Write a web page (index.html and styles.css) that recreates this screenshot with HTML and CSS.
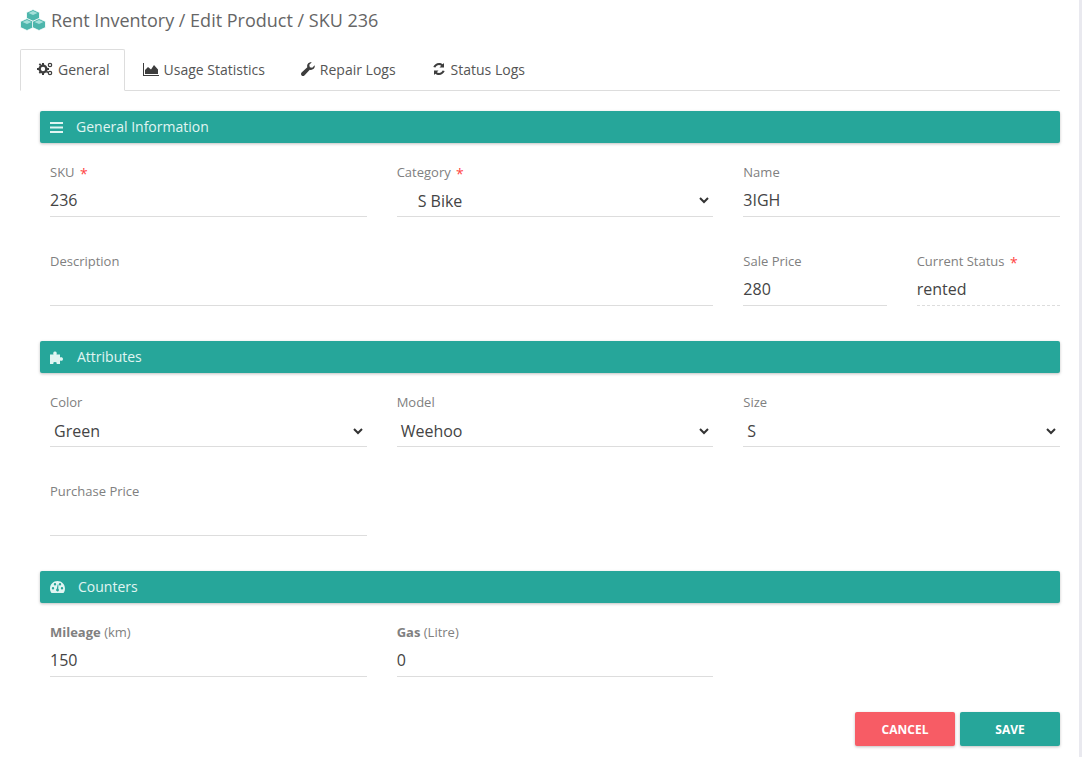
FILE: index.html
```html
<!DOCTYPE html>
<html>
<head>
	<meta charset="UTF-8">
	<title>Edit Product</title>
	<link rel="stylesheet" href="styles.css">
</head>
<body>
	<div class="page">
		<h1 class="title">
			<svg class="cubes" viewBox="0 0 26 22" width="26" height="22">
				<g fill="#4db6ac" stroke="#fff" stroke-width=".8">
					<polygon points="13,.5 19.500,3.500 19.500,9.500 13,12.500 6.500,9.500 6.500,3.500"/>
					<polygon points="7,9.500 13.500,12.500 13.500,18.500 7,21.500 .5,18.500 .5,12.500"/>
					<polygon points="19,9.500 25.500,12.500 25.500,18.500 19,21.500 12.500,18.500 12.500,12.500"/>
				</g>
				<g fill="#a5e0da">
					<polygon points="13,2 17.500,4 13,6 8.500,4"/>
					<polygon points="7,11 11.500,13 7,15 2.500,13"/>
					<polygon points="19,11 23.500,13 19,15 14.500,13"/>
				</g>
			</svg>
			Rent Inventory / Edit Product / SKU 236
		</h1>

		<ul class="tabs">
			<li class="tab active">
				<svg class="ico" viewBox="0 0 16 14" width="16" height="14"><g fill="#3d3d3d"><circle cx="6" cy="7" r="3.4" fill="none" stroke="#3d3d3d" stroke-width="2.4"/><path d="M5 1h2v2H5zM5 11h2v2H5zM0 6h2v2H0zM10 6h2v2h-2zM1.700 2.300l1.400-1.100 1.200 1.500-1.400 1.100zM8.900 9.800l1.400-1.100 1.100 1.500-1.400 1.100zM1.700 10.700l1.400 1.100 1.200-1.500-1.400-1.100z"/><circle cx="13" cy="3" r="1.700" fill="none" stroke="#3d3d3d" stroke-width="1.200"/><circle cx="13" cy="11" r="1.700" fill="none" stroke="#3d3d3d" stroke-width="1.200"/></g></svg>
				General
			</li>
			<li class="tab">
				<svg class="ico" viewBox="0 0 16 13" width="16" height="13"><path fill="#3d3d3d" d="M0 0h1v12h15v1H0z"/><path fill="#3d3d3d" d="M2 11V7l3-3 3 2.500L11 2l4 4.500V11z"/></svg>
				Usage Statistics
			</li>
			<li class="tab">
				<svg class="ico" viewBox="0 0 14 14" width="14" height="14"><path fill="#3d3d3d" d="M13.700 3.200c.3 1.500-.2 3-1.400 3.900-1 .8-2.300 1-3.500.6L3.400 13.400c-.8.800-2 .800-2.800 0s-.8-2 0-2.800L6.300 5.200C5.900 4 6.100 2.700 6.900 1.700 7.800.5 9.300 0 10.800.3L8.300 2.800l.5 2.400 2.400.5z"/></svg>
				Repair Logs
			</li>
			<li class="tab">
				<svg class="ico" viewBox="0 0 14 14" width="14" height="14"><path fill="#3d3d3d" d="M12 1v4.500H7.500l1.700-1.700C8.500 3.200 7.800 3 7 3 5.400 3 4 4 3.400 5.500L1.300 5C2.100 2.700 4.400 1 7 1c1.400 0 2.700.5 3.700 1.300zM2 13V8.500h4.500l-1.700 1.700c.7.600 1.400.8 2.200.8 1.600 0 3-1 3.600-2.500l2.100.5C11.900 11.300 9.600 13 7 13c-1.400 0-2.700-.5-3.700-1.300z"/></svg>
				Status Logs
			</li>
		</ul>

		<div class="content">
			<div class="bar">
				<svg class="bar-ico" viewBox="0 0 13 11" width="13" height="11"><path fill="#e0f5f2" d="M0 0h13v2H0zM0 4.500h13v2H0zM0 9h13v2H0z"/></svg>
				<span class="bar-txt">General Information</span>
			</div>
			<div class="row">
				<div class="field">
					<label>SKU <i>*</i></label>
					<div class="val">236</div>
				</div>
				<div class="field">
					<label>Category <i>*</i></label>
					<div class="val sel cat"><span>S Bike</span><svg class="chev" viewBox="0 0 10 7" width="10" height="7"><path d="M1 1l4 4 4-4" fill="none" stroke="#333" stroke-width="2"/></svg></div>
				</div>
				<div class="field">
					<label>Name</label>
					<div class="val">3IGH</div>
				</div>
			</div>
			<div class="row">
				<div class="field wide">
					<label>Description</label>
					<div class="val"></div>
				</div>
				<div class="pair">
					<div class="field">
						<label>Sale Price</label>
						<div class="val">280</div>
					</div>
					<div class="field">
						<label>Current Status <i>*</i></label>
						<div class="val dash">rented</div>
					</div>
				</div>
			</div>

			<div class="bar next">
				<svg class="bar-ico" viewBox="0 0 14 13" width="14" height="13"><path fill="#e0f5f2" d="M0 3.500h3.500C3 2.500 3 .5 5 .5s2 2 1.500 3H10v3c1-.5 3-.5 3 1.500s-2 2-3 1.500v3.500H6.500c.5-1 .5-2-1.500-2s-2 1-1.500 2H0z"/></svg>
				<span class="bar-txt">Attributes</span>
			</div>
			<div class="row">
				<div class="field">
					<label>Color</label>
					<div class="val sel"><span>Green</span><svg class="chev" viewBox="0 0 10 7" width="10" height="7"><path d="M1 1l4 4 4-4" fill="none" stroke="#333" stroke-width="2"/></svg></div>
				</div>
				<div class="field">
					<label>Model</label>
					<div class="val sel"><span>Weehoo</span><svg class="chev" viewBox="0 0 10 7" width="10" height="7"><path d="M1 1l4 4 4-4" fill="none" stroke="#333" stroke-width="2"/></svg></div>
				</div>
				<div class="field">
					<label>Size</label>
					<div class="val sel"><span>S</span><svg class="chev" viewBox="0 0 10 7" width="10" height="7"><path d="M1 1l4 4 4-4" fill="none" stroke="#333" stroke-width="2"/></svg></div>
				</div>
			</div>
			<div class="row">
				<div class="field">
					<label>Purchase Price</label>
					<div class="val"></div>
				</div>
			</div>

			<div class="bar next">
				<svg class="bar-ico" viewBox="0 0 15 12" width="15" height="12"><path fill="#e0f5f2" fill-rule="evenodd" d="M7.500 0C3.400 0 0 3.400 0 7.500c0 1.700.5 3.200 1.500 4.500h12c1-1.300 1.500-2.800 1.500-4.500C15 3.400 11.600 0 7.500 0zM3 8.500a1.200 1.200 0 1 1 0-2.400 1.200 1.200 0 0 1 0 2.400zM5 4.500a1.200 1.200 0 1 1 0-2.400 1.200 1.200 0 0 1 0 2.400zM7.500 10.500a1.500 1.500 0 0 1-.7-2.800l.9-4.200h.7l-.1 4.300a1.500 1.500 0 0 1-.8 2.700zM10 4.500a1.200 1.200 0 1 1 0-2.400 1.200 1.200 0 0 1 0 2.400zM12 8.500a1.200 1.200 0 1 1 0-2.400 1.200 1.200 0 0 1 0 2.400z"/></svg>
				<span class="bar-txt">Counters</span>
			</div>
			<div class="row">
				<div class="field">
					<label><b>Mileage</b> (km)</label>
					<div class="val">150</div>
				</div>
				<div class="field">
					<label><b>Gas</b> (Litre)</label>
					<div class="val">0</div>
				</div>
			</div>

			<div class="actions">
				<button class="btn cancel">CANCEL</button>
				<button class="btn save">SAVE</button>
			</div>
		</div>
	</div>
</body>
</html>
```

FILE: styles.css
```css
* {
	padding: 0;
	margin: 0;
	box-sizing: border-box;
}
html, body {
	height: 757px;
	overflow: hidden;
	background: #fff;
}
body {
	font-family: "Open Sans", "Liberation Sans", sans-serif;
	color: #555;
}
ul, li {
	list-style: none;
}
.page {
	width: 1082px;
	height: 757px;
	padding: 9px 19px 0 20px;
	border-right: 3px solid #e9e9ef;
}
.title {
	display: flex;
	align-items: center;
	gap: 5px;
	height: 24px;
	padding-bottom: 2px;
	font-size: 18px;
	font-weight: 400;
	color: #666;
}
.cubes {
	flex: none;
}
.tabs {
	display: flex;
	height: 42px;
	margin-top: 16px;
	border-bottom: 1px solid #ddd;
}
.tab {
	display: flex;
	align-items: center;
	gap: 5px;
	height: 42px;
	padding: 0 16px 2px;
	margin-right: 2px;
	font-size: 14px;
	color: #555;
	border: 1px solid transparent;
}
.tab.active {
	padding-right: 14px;
	margin-right: 1px;
	border-color: #ddd;
	border-bottom-color: #fff;
	border-radius: 2px 2px 0 0;
	background: #fff;
}
.ico {
	flex: none;
}
.content {
	padding: 20px 0 0 20px;
}
.bar {
	display: flex;
	align-items: center;
	height: 32px;
	padding-left: 10px;
	background: #26a69a;
	border-radius: 2px;
	box-shadow: 0 1px 3px rgba(0,0,0,.25);
}
.bar.next {
	margin-top: 35px;
}
.bar-ico {
	flex: none;
	margin-right: 13px;
}
.bar-txt {
	font-size: 14px;
	color: #e0f5f2;
	position: relative;
	top: -1px;
}
.row {
	display: grid;
	grid-template-columns: repeat(3, 1fr);
	column-gap: 30px;
	padding: 0 0 0 10px;
	margin-top: 19px;
}
.row + .row {
	margin-top: 34px;
}
.field {
	height: 55px;
	min-width: 0;
}
.wide {
	grid-column: span 2;
}
.pair {
	display: grid;
	grid-template-columns: 1fr 1fr;
	column-gap: 30px;
}
label {
	display: block;
	height: 20px;
	font-size: 13px;
	line-height: 20px;
	color: #808080;
}
label i {
	font-style: normal;
	color: #f44;
	font-size: 14px;
	margin-left: 2px;
	vertical-align: -2px;
}
label b {
	font-weight: 700;
}
.val {
	display: flex;
	align-items: center;
	height: 35px;
	padding-top: 2px;
	font-size: 16px;
	color: #444;
	border-bottom: 1px solid #ddd;
}
.dash {
	border-bottom: 1px dashed #ddd;
}
.sel {
	justify-content: space-between;
	padding: 4px 4px 0;
}
.cat {
	padding-left: 21px;
	padding-top: 3px;
}
.chev {
	flex: none;
}
.actions {
	display: flex;
	justify-content: flex-end;
	gap: 5px;
	margin-top: 35px;
}
.btn {
	width: 100px;
	height: 34px;
	font-family: "Open Sans", "Liberation Sans", sans-serif;
	font-size: 12px;
	font-weight: 700;
	color: #fff;
	border: 0;
	border-radius: 2px;
	box-shadow: 0 1px 3px rgba(0,0,0,.25);
}
.cancel {
	background: #f75c65;
}
.save {
	background: #26a69a;
}
```
